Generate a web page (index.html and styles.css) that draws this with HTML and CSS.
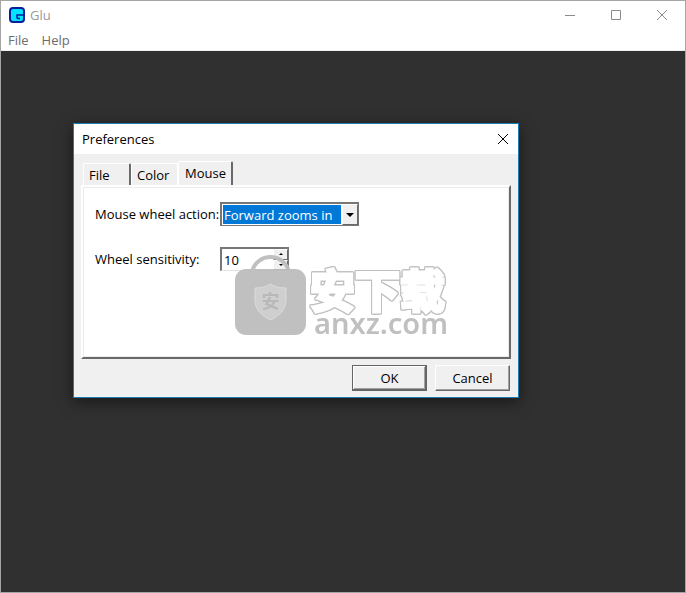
FILE: index.html
```html
<!DOCTYPE html>
<html lang="en">
<head>
<meta charset="utf-8">
<title>Glu</title>
<link rel="stylesheet" href="styles.css">
</head>
<body>
<div class="window">
  <header class="titlebar">
    <svg class="logo" width="16" height="16" viewBox="0 0 16 16" aria-hidden="true">
      <rect x="1" y="1" width="14" height="14" rx="3" fill="#00e5ff" stroke="#0a1e9c" stroke-width="2"/>
      <path d="M14 8H8V11.500M8 11.500H11" fill="none" stroke="#0a1e9c" stroke-width="1.500"/>
    </svg>
    <span class="app-name">Glu</span>
    <div class="window-controls">
      <button type="button" class="control" aria-label="Minimize"><svg width="10" height="10" viewBox="0 0 10 10"><path d="M0 5.500H10"/></svg></button>
      <button type="button" class="control" aria-label="Maximize"><svg width="10" height="10" viewBox="0 0 10 10"><path d="M.5 .5H9.500V9.500H.5Z"/></svg></button>
      <button type="button" class="control" aria-label="Close"><svg width="10" height="10" viewBox="0 0 10 10"><path d="M0 0L10 10M10 0L0 10"/></svg></button>
    </div>
  </header>
  <nav class="menubar">
    <button type="button" class="menu">File</button>
    <button type="button" class="menu">Help</button>
  </nav>
  <main class="canvas"></main>
</div>

<section class="dialog" role="dialog" aria-labelledby="dialog-title">
  <header class="dialog-header">
    <h1 class="dialog-title" id="dialog-title">Preferences</h1>
    <button type="button" class="dialog-close" aria-label="Close"><svg width="12" height="12" viewBox="0 0 12 12"><path d="M1 1L11 11M11 1L1 11"/></svg></button>
  </header>
  <form class="dialog-body">
    <div class="tabs" role="tablist">
      <button type="button" class="tab" role="tab">File</button>
      <button type="button" class="tab" role="tab">Color</button>
      <button type="button" class="tab tab-active" role="tab" aria-selected="true">Mouse</button>
    </div>
    <div class="panel" role="tabpanel">
      <label class="label" for="wheel">Mouse wheel action:</label>
      <div class="field combo">
        <select id="wheel" class="select"><option>Forward zooms in</option></select>
        <span class="drop"><svg width="8" height="4" viewBox="0 0 8 4"><path d="M0 0H8L4 4Z"/></svg></span>
      </div>
      <label class="label" for="sensitivity">Wheel sensitivity:</label>
      <div class="field spinner">
        <input id="sensitivity" class="number" type="text" inputmode="numeric" value="10">
        <div class="steps">
          <button type="button" class="step" aria-label="Increase"><svg width="4" height="2" viewBox="0 0 4 2"><path d="M0 2L2 0L4 2Z"/></svg></button>
          <button type="button" class="step" aria-label="Decrease"><svg width="4" height="2" viewBox="0 0 4 2"><path d="M0 0L2 2L4 0Z"/></svg></button>
        </div>
      </div>
    </div>
    <div class="actions">
      <button type="button" class="button button-default">OK</button>
      <button type="button" class="button">Cancel</button>
    </div>
  </form>
</section>

<div class="watermark">
  <svg class="bag" width="71" height="80" viewBox="0 0 71 80" aria-hidden="true">
    <path d="M17 17C22 -3 49 -3 54 17" fill="none" stroke="#bdbdbd" stroke-width="4"/>
    <rect x="0" y="14" width="71" height="66" rx="11" fill="#bdbdbd"/>
    <path d="M35.500 29C40 32 45 33 51 33V45C51 55 44 61 35.500 65C27 61 20 55 20 45V33C26 33 31 32 35.500 29Z" fill="#cdcdcd" stroke="#dadada"/>
    <text x="35.500" y="53" class="shield-text" text-anchor="middle">安</text>
  </svg>
  <div class="brand">
    <span class="brand-name">安下载</span>
    <span class="brand-site">anxz.com</span>
  </div>
</div>
</body>
</html>
```

FILE: styles.css
```css
* {
  box-sizing: border-box;
}

body {
  margin: 0;
  min-height: 100vh;
  display: flex;
  background: #303030;
  color: #000;
  font: 13px/18px "Open Sans", "Noto Sans CJK SC", sans-serif;
}

button,
input,
select {
  margin: 0;
  padding: 0;
  border: 0;
  border-radius: 0;
  background: none;
  color: inherit;
  font: inherit;
}

svg {
  display: block;
}

.window {
  flex: 1;
  display: flex;
  flex-direction: column;
  border: 1px solid #a5a5a5;
}

.titlebar {
  display: flex;
  align-items: center;
  height: 28px;
  padding-left: 8px;
  background: #fff;
  color: #999;
}

.app-name {
  margin-left: 5px;
}

.window-controls {
  display: flex;
  margin-left: auto;
}

.control {
  display: grid;
  place-items: center;
  width: 46px;
  height: 28px;
}

.control path {
  fill: none;
  stroke: #8a8a8a;
}

.menubar {
  display: flex;
  gap: 13px;
  height: 22px;
  padding-left: 7px;
  background: #fff;
  border-bottom: 1px solid #f0f0f0;
  color: #6d6d6d;
}

.canvas {
  flex: 1;
  background: #303030;
}

.dialog {
  position: absolute;
  left: 73px;
  top: 123px;
  width: 446px;
  border: 1px solid #1d7ab5;
  background: #f0f0f0;
  box-shadow: 0 4px 14px rgba(0, 0, 0, 0.5);
}

.dialog-header {
  display: flex;
  align-items: center;
  justify-content: space-between;
  height: 30px;
  padding: 0 9px 0 8px;
  background: #fff;
}

.dialog-title {
  margin: 0;
  font-size: 13px;
  font-weight: 400;
}

.dialog-close path {
  fill: none;
  stroke: #000;
}

.dialog-body {
  padding: 7px 7px 6px;
}

.tabs {
  display: flex;
  align-items: flex-end;
  padding-left: 2px;
}

.tab {
  width: 47px;
  height: 22px;
  padding: 0 5px;
  border: solid #fff;
  border-width: 1px 1px 0 1px;
  border-radius: 2px 2px 0 0;
  text-align: left;
}

.tab:first-child,
.tab-active {
  border-right: 2px solid #696969;
}

.tab:first-child {
  width: 48px;
}

.tab-active {
  width: 55px;
  height: 24px;
  padding: 0 6px 2px;
}

.panel {
  display: grid;
  grid-template-columns: 125px auto;
  grid-auto-rows: 24px;
  row-gap: 21px;
  align-items: center;
  justify-content: start;
  min-height: 174px;
  padding: 15px 12px;
  align-content: start;
  border: 2px solid;
  border-color: #fff #696969 #696969 #fff;
  background: #fff;
  box-shadow: inset 0 0 0 1px #ebebeb;
}

.label {
  white-space: nowrap;
}

.field {
  display: flex;
  border: 2px solid;
  border-color: #777 #e3e3e3 #e3e3e3 #777;
  background: #fff;
}

.combo {
  width: 139px;
  height: 24px;
  border-color: #777;
  border-bottom-width: 1px;
  border-right-width: 1px;
}

.select {
  flex: 1;
  min-width: 0;
  margin: 1px;
  padding-left: 1px;
  appearance: none;
  background: #0078d7;
  color: #fff;
}

.drop,
.step {
  display: grid;
  place-items: center;
  border: 1px solid;
  border-color: #fff #696969 #696969 #fff;
  background: #f0f0f0;
}

.drop {
  width: 16px;
  pointer-events: none;
}

.spinner {
  width: 69px;
  height: 24px;
  border-right: 1px solid #777;
  border-bottom-width: 1px;
}

.number {
  flex: 1;
  min-width: 0;
  padding-left: 2px;
}

.steps {
  display: grid;
  grid-template-rows: 1fr 1fr;
  width: 15px;
}

.actions {
  display: flex;
  justify-content: flex-end;
  gap: 8px;
  padding: 6px 1px 0 0;
}

.button {
  width: 75px;
  height: 26px;
  border: 1px solid;
  border-color: #fff #696969 #696969 #fff;
  background: #f0f0f0;
  box-shadow: inset -1px -1px #a0a0a0;
}

.button-default {
  border-color: #646464;
  box-shadow: inset -1px -1px #696969, inset 1px 1px #fff, inset -2px -2px #a0a0a0;
}

.watermark {
  position: absolute;
  left: 235px;
  top: 255px;
  display: flex;
  gap: 4px;
  opacity: 0.95;
  pointer-events: none;
}

.shield-text {
  fill: #b5b5b5;
  font: 700 18px "Noto Sans CJK SC", sans-serif;
}

.brand {
  display: flex;
  flex-direction: column;
  padding-top: 14px;
}

.brand-name {
  color: #fff;
  font: 700 45px/40px "Noto Sans CJK SC", sans-serif;
  -webkit-text-stroke: 3px #fff;
  filter: drop-shadow(1px 0 #bdbdbd) drop-shadow(-1px 0 #bdbdbd) drop-shadow(0 1px #bdbdbd) drop-shadow(0 -1px #bdbdbd);
}

.brand-site {
  padding-left: 4px;
  color: #bdbdbd;
  font: 600 29px/28px "Noto Sans", sans-serif;
}
```
